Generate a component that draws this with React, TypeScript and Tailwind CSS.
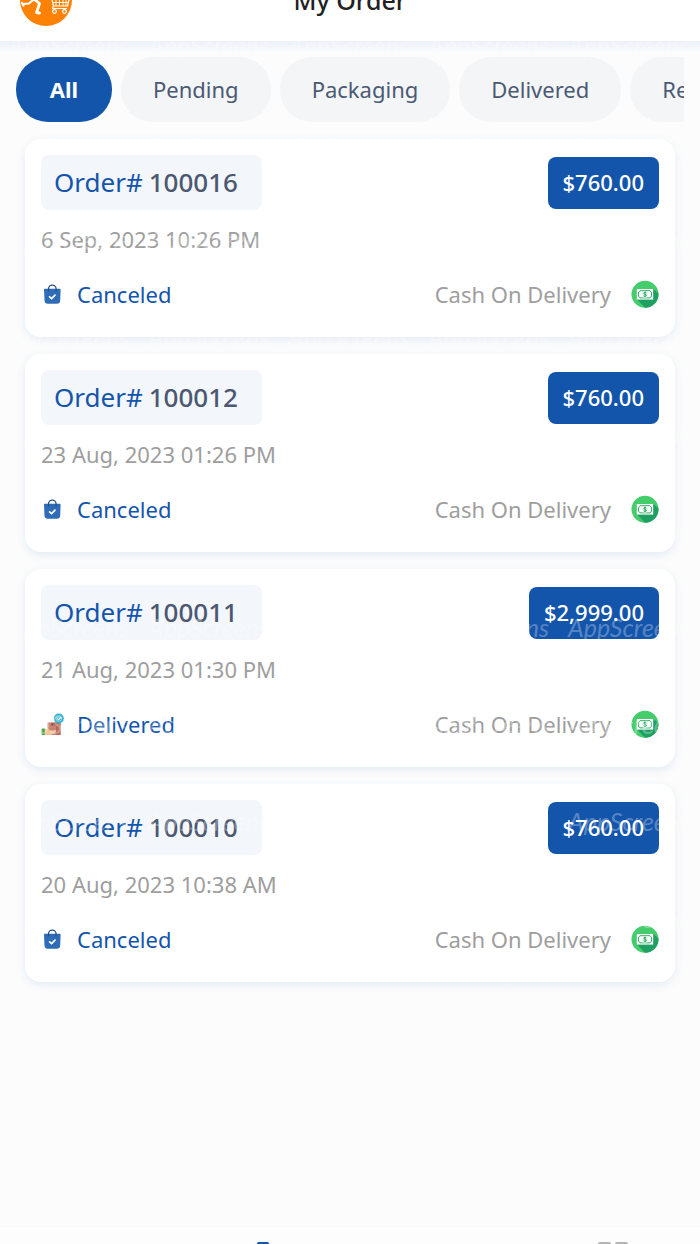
const TABS = ['All', 'Pending', 'Packaging', 'Delivered', 'Returned'];

type Status = 'Canceled' | 'Delivered';

type Order = {
  id: string;
  price: string;
  date: string;
  status: Status;
  payment: string;
};

const ORDERS: Order[] = [
  { id: '100016', price: '$760.00', date: '6 Sep, 2023 10:26 PM', status: 'Canceled', payment: 'Cash On Delivery' },
  { id: '100012', price: '$760.00', date: '23 Aug, 2023 01:26 PM', status: 'Canceled', payment: 'Cash On Delivery' },
  { id: '100011', price: '$2,999.00', date: '21 Aug, 2023 01:30 PM', status: 'Delivered', payment: 'Cash On Delivery' },
  { id: '100010', price: '$760.00', date: '20 Aug, 2023 10:38 AM', status: 'Canceled', payment: 'Cash On Delivery' },
];

const WATERMARK_ROWS = Array.from({ length: 13 });
const WATERMARK_COLS = Array.from({ length: 5 });

function Logo() {
  return (
    <svg viewBox="0 0 52 52" className="size-[52px] shrink-0" aria-hidden="true">
      <circle cx="26" cy="26" r="26" fill="#ff8204" />
      {/* runner */}
      <g fill="none" stroke="#fff" strokeLinecap="round" strokeLinejoin="round">
        <circle cx="18" cy="14" r="2" fill="#fff" />
        <path d="M17 19L14 25" strokeWidth="4.500" />
        <path d="M13 26L9 29.500L2.500 30M2 29L3.500 31.500" strokeWidth="2.200" />
        <path d="M14 25L19.500 29.500L16.500 38.700L19.500 39" strokeWidth="2.800" />
        <path d="M17 20L23 24L29 22" strokeWidth="2" />
      </g>
      {/* cart */}
      <g fill="none" stroke="#fff" strokeWidth="1.200" strokeLinejoin="round">
        <path d="M30 21H50L47.500 32H33.500L30 18" />
        <path d="M31.500 25H49M32.500 28.500H48M36 21V32M39.500 21V32M43 21V32M46 21V32" strokeWidth=".9" />
        <path d="M33.500 32L32.500 34.500H47" />
        <circle cx="34.500" cy="37.500" r="1.900" />
        <circle cx="44.500" cy="37.500" r="1.900" />
      </g>
    </svg>
  );
}

function BagIcon() {
  return (
    <svg viewBox="0 0 24 24" className="size-6" aria-hidden="true">
      <path d="M4 6.800h14.600c.6 0 1 .4 1 1L19.200 18.500c-.1 2.200-1.300 3.300-3.300 3.300H6.800c-2 0-3.200-1.100-3.300-3.300L3 7.800c0-.6.400-1 1-1z" fill="#2f6cb8" />
      <path d="M7.500 9.500V7a3.800 3.800 0 0 1 7.600 0v2.500" fill="none" stroke="#244f86" strokeWidth="1.300" />
      <path d="M8.600 14.800l2 1.800 3.400-3.400" fill="none" stroke="#fff" strokeWidth="1.700" strokeLinecap="round" />
    </svg>
  );
}

function ParcelIcon() {
  return (
    <svg viewBox="0 0 24 24" className="size-6" aria-hidden="true">
      <path d="M6.500 10.500h13V23h-13z" fill="#c98472" />
      <path d="M15 10.500h4.500V23H15z" fill="#b8695e" />
      <path d="M10.500 10.500h4v3.500l-2-1-2 1z" fill="#864239" />
      <path d="M3 17.500c3-1 5-.5 7 1.500l4-1c1.500 0 1.500 1.500.5 2L10 23H3z" fill="#f3c596" />
      <path d="M1 16.500h2.800V23H1z" fill="#46a83f" />
      <path d="M0 17h1.200v5.500H0z" fill="#b9dcb3" />
      <circle cx="17.800" cy="6.500" r="5" fill="#35b4cf" />
      <circle cx="17.800" cy="6.500" r="2.800" fill="none" stroke="#a6e3ee" strokeWidth=".8" />
      <path d="M16.300 6.500l1.300 1.300 2.500-3" fill="none" stroke="#fff" strokeWidth="1.100" />
    </svg>
  );
}

function CashIcon() {
  return (
    <svg viewBox="0 0 28 28" className="size-7" aria-hidden="true">
      <circle cx="14" cy="14.300" r="13.500" fill="#45cd6c" />
      <path d="M22.500 9l4.900 4.500A13.500 13.500 0 0 1 14 27.800L6 19.500z" fill="#1f9f62" />
      <path d="M5.800 9h16.400v10.600H5.800z" fill="#fff" />
      <path d="M9 10.700h10a2 2 0 0 0 1.500 1.500v4.200a2 2 0 0 0-1.500 1.500H9a2 2 0 0 0-1.500-1.500v-4.200A2 2 0 0 0 9 10.700z" fill="none" stroke="#33b06a" strokeWidth="1" />
      <ellipse cx="14" cy="14.300" rx="3" ry="3.400" fill="#e4f6ea" />
      <path d="M15.300 12.900c-.5-.7-2.500-.8-2.500.3 0 1.300 2.600.8 2.600 2.200 0 1.200-2.200 1.100-2.800.3M14 11.500v5.600" fill="none" stroke="#23a05f" strokeWidth=".9" />
    </svg>
  );
}

function OrderCard({ order }: { order: Order }) {
  return (
    <article className="rounded-2xl bg-white px-4 pt-4 pb-[29px] shadow-[0_3px_10px_rgba(20,84,172,0.10)]">
      <div className="flex items-center justify-between">
        <h2 className="flex h-[55px] min-w-[221px] items-center gap-1.5 rounded-lg bg-[#f3f6fb] px-[13px] text-[26px] font-normal text-[#1455ac]">
          Order# <span className="font-medium text-[#4b5870]">{order.id}</span>
        </h2>
        <span className="flex h-[52px] items-center rounded-lg bg-[#1455ac] px-[15px] text-[22px] font-medium text-white">
          {order.price}
        </span>
      </div>
      <p className="mt-[15px] text-[22px] leading-7 text-[#9e9e9e]">{order.date}</p>
      <div className="mt-[27px] flex h-7 items-center justify-between text-[22px] leading-7">
        <span className="flex items-center gap-3 text-[#1455ac]">
          {order.status === 'Delivered' ? <ParcelIcon /> : <BagIcon />}
          {order.status}
        </span>
        <span className="flex items-center gap-5 text-[#9e9e9e]">
          {order.payment}
          <CashIcon />
        </span>
      </div>
    </article>
  );
}

function Watermark() {
  return (
    <div
      aria-hidden="true"
      className="pointer-events-none absolute inset-0 flex flex-col gap-[69px] overflow-hidden pt-[31px] pl-2 font-['Lato','Noto_Sans',sans-serif] text-[25px] leading-7 text-white/30 italic select-none"
    >
      {WATERMARK_ROWS.map((_, row) => (
        <div key={row} className="flex">
          {WATERMARK_COLS.map((_, col) => (
            <span key={col} className="w-[140px] shrink-0">
              AppScreens
            </span>
          ))}
        </div>
      ))}
    </div>
  );
}

export default function App() {
  return (
    <div className="relative flex min-h-screen flex-col overflow-hidden bg-[#fcfcfc] font-['Noto_Sans','Open_Sans',sans-serif]">
      {/* app bar, scrolled half out of view */}
      <header className="grid h-[41px] grid-cols-3 content-end items-center overflow-hidden bg-white px-5 pb-[15px]">
        <Logo />
        <h1 className="text-center text-[25px] leading-8 font-medium text-[#202124]">My Order</h1>
      </header>

      <main className="flex-1 bg-linear-to-b from-[#ecf0f9] to-[#fcfcfc] to-[12px]">
        <div className="px-4 pt-4">
          <nav className="flex gap-[9px] overflow-hidden" aria-label="Order status">
            {TABS.map((tab, i) => (
              <button
                key={tab}
                type="button"
                className={`h-[65px] min-w-24 shrink-0 rounded-[32px] px-8 text-[22px] ${
                  i === 0 ? 'bg-[#1455ac] font-bold text-white' : 'bg-[#f3f5f7] text-[#4b5a73]'
                }`}
              >
                {tab}
              </button>
            ))}
          </nav>
        </div>
        <section className="mt-[17px] flex flex-col gap-[17px] px-[25px]">
          {ORDERS.map((order) => (
            <OrderCard key={order.id} order={order} />
          ))}
        </section>
      </main>

      <nav className="grid h-[18px] grid-cols-4 justify-items-center overflow-hidden border-t border-[#f9f9f9] bg-[#fdfdfd] pt-[15px]" aria-label="Main">
        <a href="#home" aria-label="Home" />
        <a href="#orders" aria-label="Orders">
          <svg viewBox="0 0 24 24" className="size-6" fill="#1455ac" aria-hidden="true">
            <path d="M7 0h10l2 3h3v20H2V3h3z" />
          </svg>
        </a>
        <a href="#chat" aria-label="Chat" />
        <a href="#more" aria-label="More">
          <svg viewBox="0 0 30 30" className="size-[30px]" fill="#b4b4b4" aria-hidden="true">
            <rect width="13" height="13" x="0" rx="2" />
            <rect width="13" height="13" x="17" rx="2" />
            <rect width="13" height="13" x="0" y="17" rx="2" />
            <rect width="13" height="13" x="17" y="17" rx="2" />
          </svg>
        </a>
      </nav>

      <Watermark />
    </div>
  );
}
